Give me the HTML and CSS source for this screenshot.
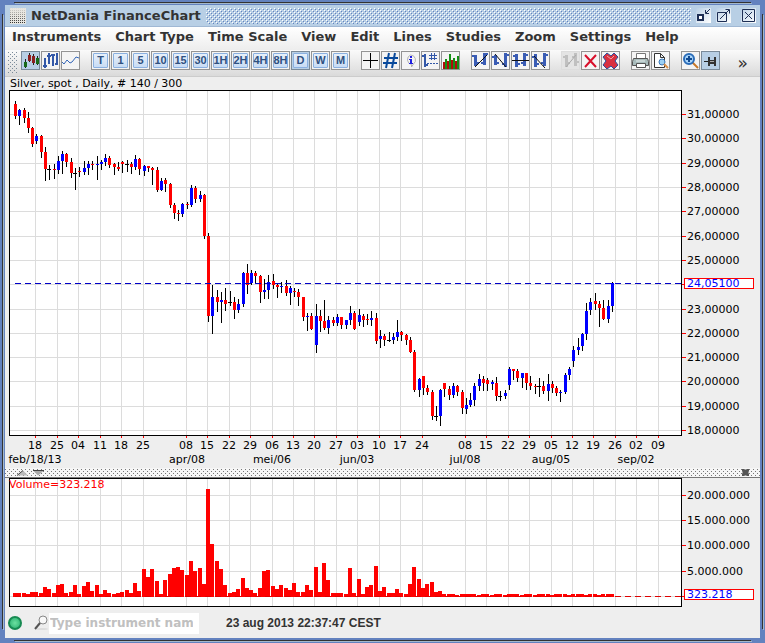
FILE: index.html
```
<!DOCTYPE html>
<html lang="en">
<head>
    <meta charset="utf-8">
    <title>NetDania FinanceChart</title>
    <link rel="stylesheet" href="styles.css">
    <script src="chart.js" defer></script>
</head>
<body>
    <div class="window">
        <header class="titlebar">
            <span class="app-icon"></span>
            <h1>NetDania FinanceChart</h1>
            <span class="bumps"></span>
            <button class="win-btn" aria-label="Minimize">
                <svg width="15" height="15" viewBox="0 0 15 15"><path d="M2 7h5v5H2z" class="win-line thick"/><path d="M14 1l-4 4M9.500 2v3.500H13" class="win-line"/></svg>
            </button>
            <button class="win-btn" aria-label="Maximize">
                <svg width="15" height="15" viewBox="0 0 15 15"><path d="M1.500 4.500h9v9h-9z" class="win-line thin"/><path d="M4 11l9-9M9.500 1.500h4v4" class="win-line"/></svg>
            </button>
            <button class="win-btn close" aria-label="Close">
                <svg width="15" height="15" viewBox="0 0 15 15"><path d="M1.500 1.500h12v12h-12z" class="win-line"/><path d="M4 4l7 7M11 4l-7 7" class="win-line"/></svg>
            </button>
        </header>

        <nav class="menubar">
            <button>Instruments</button>
            <button>Chart Type</button>
            <button>Time Scale</button>
            <button>View</button>
            <button>Edit</button>
            <button>Lines</button>
            <button>Studies</button>
            <button>Zoom</button>
            <button>Settings</button>
            <button>Help</button>
        </nav>

        <div class="toolbar">
            <span class="grip"></span>
            <div class="group">
                <button class="tool on" aria-label="Candlestick"><svg viewBox="0 0 17 17"><path d="M3.500 7v9M7.500 1v9M11.500 2v11M15.500 4v9" stroke="#222"/><path d="M2 10h3v5H2zM14 6h3v6h-3z" fill="#186a18"/><path d="M6 3h3v6H6zM10 4h3v7h-3z" fill="#8c2020"/></svg></button>
                <button class="tool" aria-label="Bars"><svg viewBox="0 0 17 17"><path d="M3 6v10M1 14h4M7 1v11M5 4h4M11 2v12M9 3h4M15 1v12M13 12h3" stroke="#3358a8" stroke-width="2" fill="none"/></svg></button>
                <button class="tool" aria-label="Line"><svg viewBox="0 0 17 17"><path d="M0 10l2 2 3-4 3 3 2-1 4-5 3 1" stroke="#3366b8" fill="none"/></svg></button>
            </div>
            <div class="group">
                <button class="tool"><span class="key">T</span></button>
                <button class="tool"><span class="key">1</span></button>
                <button class="tool"><span class="key">5</span></button>
                <button class="tool"><span class="key">10</span></button>
                <button class="tool"><span class="key">15</span></button>
                <button class="tool"><span class="key">30</span></button>
                <button class="tool"><span class="key">1H</span></button>
                <button class="tool"><span class="key">2H</span></button>
                <button class="tool"><span class="key">4H</span></button>
                <button class="tool"><span class="key">8H</span></button>
                <button class="tool on"><span class="key">D</span></button>
                <button class="tool"><span class="key">W</span></button>
                <button class="tool"><span class="key">M</span></button>
            </div>
            <div class="group">
                <button class="tool" aria-label="Crosshair"><svg viewBox="0 0 17 17"><path d="M8.500 1v15M1 8.500h15" stroke="#000"/></svg></button>
                <button class="tool" aria-label="Grid"><svg viewBox="0 0 17 17"><path d="M7 1L4 16M13 1l-3 15M2 6h14M1 11h14" stroke="#0a4a9c" stroke-width="2"/></svg></button>
                <button class="tool" aria-label="Info"><svg viewBox="0 0 17 17"><path d="M8.500 3a5 5 0 0 1 3 9l-2 3v-2.500a5 5 0 0 1-1-9.500z" fill="#f4f4f4" stroke="#b4b4b4"/><path d="M8 4h2v2H8zM7 7h3v4h1v1H7v-1h1V8H7z" fill="#2020e0"/></svg></button>
                <button class="tool" aria-label="Data window"><svg viewBox="0 0 17 17"><path d="M3 2v13M0 4h3M3 13h3" stroke="#3358a8" stroke-width="2"/><path d="M9.500 1v7M12.500 1v7M7 3.500h8M7 6.500h8" stroke="#3358a8"/><path d="M5 11.500h12" stroke="#3358a8" stroke-dasharray="2 1"/></svg></button>
                <button class="tool" aria-label="Volume"><svg viewBox="0 0 17 17"><path d="M1 10h2v7H1zM5 9h2v8H5zM9 8h2v9H9zM13 9h2v8h-2z" fill="#b00c0c"/><path d="M3 7h2v10H3zM7 2h2v15H7zM11 6h2v11h-2zM15 4h2v13h-2z" fill="#159015"/></svg></button>
            </div>
            <div class="group">
                <button class="tool" aria-label="Trend line"><svg viewBox="0 0 17 17"><path d="M2 3h3v11H2zM0 3h2v2H0zM5 10h2v2H5zM11 1h3v12h-3zM14 1h2v2h-2zM9 10h2v2H9z" fill="#3a5cb4"/><path d="M3 15L15 3" stroke="#111"/></svg></button>
                <button class="tool" aria-label="Falling line"><svg viewBox="0 0 17 17"><path d="M2 3h3v10H2zM0 4h2v2H0zM5 10h2v2H5zM12 1h3v14h-3zM15 2h2v2h-2zM10 11h2v2h-2z" fill="#3a5cb4"/><path d="M3 2l11 13" stroke="#111"/></svg></button>
                <button class="tool" aria-label="Horizontal line"><svg viewBox="0 0 17 17"><path d="M3 2h3v13H3zM1 3h2v2H1zM6 11h2v2H6zM11 1h3v13h-3zM14 2h2v2h-2zM9 10h2v2H9z" fill="#3a5cb4"/><path d="M0 8.500h17" stroke="#111"/></svg></button>
                <button class="tool" aria-label="Regression line"><svg viewBox="0 0 17 17"><path d="M2 2h3v13H2zM0 4h2v2H0zM5 11h2v2H5zM11 1h3v13h-3zM14 2h2v2h-2zM9 10h2v2H9z" fill="#3a5cb4"/><path d="M2 4l11 12" stroke="#111"/></svg></button>
            </div>
            <div class="group">
                <button class="tool off" aria-label="Edit line" disabled><svg viewBox="0 0 17 17"><path d="M3 3h3v12H3zM1 4h2v2H1zM6 10h2v2H6zM12 1h3v13h-3zM10 4h2v2h-2zM15 9h2v2h-2z" fill="#c0c0c0"/><path d="M4 15L14 3" stroke="#aaa"/></svg></button>
                <button class="tool" aria-label="Delete line"><svg viewBox="0 0 17 17"><path d="M3 3l11 12M14 3L3 15" stroke="#d8102c" stroke-width="2"/></svg></button>
                <button class="tool" aria-label="Delete all"><svg viewBox="0 0 17 17"><path d="M5 1l4 3 3-3 4 4-3 4 3 4-4 4-3-3-4 3-4-4 3-4-3-4z" fill="#d83040" stroke="#2c4d9c" stroke-linejoin="round"/><path d="M5 4l4 3 3-3" stroke="#f4a0a0" fill="none"/></svg></button>
            </div>
            <div class="group">
                <button class="tool" aria-label="Print"><svg viewBox="0 0 17 17"><path d="M4.500 7V1.500h9V7" fill="#fff" stroke="#777"/><path d="M1.500 6.500h14l1 3v4h-16v-4z" fill="#a9bcbc" stroke="#555"/><path d="M4.500 11.500h9v4h-9z" fill="#fff" stroke="#555"/><path d="M4 9h9" stroke="#e6eeee"/></svg></button>
                <button class="tool" aria-label="Print preview"><svg viewBox="0 0 17 17"><path d="M2.500 1.500h6l4 4v10h-10zM8.500 1.500v4h4" fill="#fff" stroke="#333"/><circle cx="10" cy="10" r="3" fill="#9cd0f4" stroke="#3a78b8"/><path d="M12 12l4 4" stroke="#d89048" stroke-width="2"/></svg></button>
            </div>
            <div class="group">
                <button class="tool" aria-label="Zoom in"><svg viewBox="0 0 17 17"><path d="M10 10l6 6" stroke="#c87828" stroke-width="2"/><circle cx="7" cy="7" r="5" fill="#a8d4fa" stroke="#2a6cb8" stroke-width="2"/><path d="M7 4v6M4 7h6" stroke="#124a90" stroke-width="2"/></svg></button>
                <button class="tool on" aria-label="Pin"><svg viewBox="0 0 17 17"><path d="M2 9.500h5" stroke="#222"/><path d="M6 5h2v9H6zM8 8h4v4H8zM12 5h2v9h-2z" fill="#333"/><path d="M8 9.500h4" stroke="#aaa"/></svg></button>
            </div>
            <button class="more" aria-label="More tools">»</button>
        </div>

        <main>
            <h2 class="chart-title">Silver, spot , Daily, # 140 / 300</h2>
            <svg id="priceChart" class="chart" viewBox="5 90 755 378" role="img" aria-label="Silver, spot"></svg>
            <div class="splitter">
                <svg class="arrows" width="28" height="6" viewBox="0 0 28 6"><path d="M0 5.500L6 .5l5 5z" fill="#bbb"/><path d="M0 5.500L6 .5" stroke="#444"/><path d="M16 .5h11l-6 5z" fill="#aaa"/><path d="M16 .5h11" stroke="#444"/></svg>
                <button class="split-close" aria-label="Close volume"><svg width="7" height="7" viewBox="0 0 7 7"><path d="M0 0h7v7H0z" fill="#aaa"/><path d="M0 0h2l1 1h1l1-1h2v2L6 3v1l1 1v2H5L4 6H3L2 7H0V5l1-1V3L0 2z" fill="#555"/></svg></button>
            </div>
            <svg id="volumeChart" class="chart" viewBox="5 478 755 130" role="img" aria-label="Volume"></svg>
        </main>

        <footer class="statusbar">
            <span class="led"></span>
            <label for="instrument"><svg width="15" height="16" viewBox="0 0 15 16"><ellipse cx="8" cy="14" rx="6" ry="1" fill="#ddd"/><circle cx="9" cy="5" r="4" fill="#f8f8f8" stroke="#888"/><path d="M6 8l-5 6" stroke="#555" stroke-width="2"/></svg></label>
            <input type="text" id="instrument" placeholder="Type instrument name" aria-label="Instrument name">
            <time>23 aug 2013 22:37:47 CEST</time>
        </footer>
    </div>
</body>
</html>
```
FILE: styles.css
```
* {
    box-sizing: border-box;
}

body {
    margin: 0;
    background-color: #6382bf;
    font-family: "DejaVu Sans", sans-serif;
    color: #333;
}

button {
    padding: 0;
    border: none;
    background: none;
    color: inherit;
    font: inherit;
}

.window {
    min-height: 100vh;
    padding: 5px;
    background-color: #6382bf;
    background-image:
        linear-gradient(#333, #333), linear-gradient(#a3b8cc, #a3b8cc),
        linear-gradient(#333, #333), linear-gradient(#a3b8cc, #a3b8cc),
        linear-gradient(#333, #333), linear-gradient(#a3b8cc, #a3b8cc),
        linear-gradient(#333, #333), linear-gradient(#a3b8cc, #a3b8cc);
    background-repeat: no-repeat;
    background-position:
        14px 2px, 15px 3px,
        14px calc(100% - 2px), 15px calc(100% - 1px),
        2px 14px, 3px 15px,
        calc(100% - 2px) 14px, calc(100% - 1px) 15px;
    background-size:
        calc(100% - 28px) 1px, calc(100% - 28px) 1px,
        calc(100% - 28px) 1px, calc(100% - 28px) 1px,
        1px calc(100% - 28px), 1px calc(100% - 28px),
        1px calc(100% - 28px), 1px calc(100% - 28px);
}

/* title bar */

.titlebar {
    display: flex;
    align-items: center;
    gap: 5px;
    height: 22px;
    padding: 0 4px 0 5px;
    background-color: #b8cfe5;
    border-bottom: 1px solid #a0b8d4;
}

.titlebar h1 {
    margin: 0;
    font-size: 13px;
    line-height: 20px;
}

.app-icon {
    width: 16px;
    height: 16px;
    background-color: #e8e6e0;
    background-image:
        linear-gradient(#e8e6e0, rgba(232, 230, 224, 0)),
        conic-gradient(at 1px 1px, transparent 75%, #222 0);
    background-size: 16px 16px, 2px 2px;
}

/* 1px dots, light and dark, on a 4px raster */
.bumps {
    flex: 1;
    height: 16px;
    background-image:
        conic-gradient(at 1px 1px, transparent 75%, #6382bf 0),
        conic-gradient(at 1px 1px, transparent 75%, #6382bf 0),
        conic-gradient(at 1px 1px, transparent 75%, #fff 0),
        conic-gradient(at 1px 1px, transparent 75%, #fff 0);
    background-size: 4px 4px;
    background-position: 1px 1px, 3px 3px, 0 0, 2px 2px;
}

.win-btn {
    display: flex;
    width: 15px;
    height: 15px;
    background-image: linear-gradient(135deg, #b8cfe5, #fff);
}

.win-btn.close {
    margin-left: 5px;
}

.win-line {
    fill: none;
    stroke: #1e2f55;
}

.win-line.thick {
    fill: #fff;
    stroke-width: 2;
}

/* menus */

.menubar {
    display: flex;
    gap: 14px;
    height: 23px;
    padding: 0 7px;
    background-image: linear-gradient(#fff, #ededed);
    font-size: 13px;
    font-weight: bold;
    line-height: 20px;
}

.menubar button {
    height: 20px;
}

/* tool bar */

.toolbar {
    display: flex;
    gap: 11px;
    height: 27px;
    padding: 1px 2px;
    background-image: linear-gradient(#fafafa, #dadada);
    border-bottom: 1px solid #ccc;
}

.grip {
    width: 10px;
    height: 22px;
    margin-right: -7px;
    background-image:
        conic-gradient(at 1px 1px, transparent 75%, #7a8a99 0),
        conic-gradient(at 1px 1px, transparent 75%, #7a8a99 0);
    background-size: 4px 4px;
    background-position: 1px 1px, 3px 3px;
}

.group {
    display: flex;
    gap: 1px;
}

.tool {
    display: flex;
    align-items: center;
    justify-content: center;
    width: 19px;
    height: 19px;
    border: 1px solid #949494;
    background-color: #f4f4f4;
}

.tool svg {
    width: 17px;
    height: 17px;
    fill: none;
}

.tool.on {
    background-color: #b8cfe5;
    border-color: #7a8a99;
}

.tool.off {
    background-color: #e4e4e4;
    border-color: #ddd;
}

.key {
    display: flex;
    justify-content: center;
    width: 15px;
    height: 15px;
    border: 1px solid #8ab0e0;
    border-radius: 1px;
    background-image: linear-gradient(#e8f0fa, #c8dcf4);
    color: #2f5080;
    font: bold 11px/13px "Liberation Sans", Arial, sans-serif;
}

.more {
    margin-left: auto;
    padding-right: 10px;
    font-size: 17px;
    line-height: 20px;
}

/* charts */

main {
    background-color: #eee;
}

.chart-title {
    margin: 0;
    padding-left: 5px;
    height: 13px;
    color: #000;
    font-size: 11px;
    font-weight: normal;
    line-height: 13px;
}

.chart {
    display: block;
    width: 100%;
    height: auto;
    font-size: 11px;
    shape-rendering: crispEdges;
}

.plot {
    fill: #fff;
    stroke: #000;
}

.grid {
    stroke: #dcdcdc;
}

.tick {
    stroke: #f00;
}

.wick,
.doji {
    stroke: #000;
}

.up-bar {
    fill: #00f;
}

.down-bar,
.caption {
    fill: #f00;
}

.last-line {
    stroke: #0000c8;
    stroke-dasharray: 6 4;
}

.last-line.volume {
    stroke: #e00000;
}

.last-box {
    fill: #fff;
    stroke: #f00;
}

.last-value {
    fill: #00f;
}

.splitter {
    display: flex;
    align-items: center;
    justify-content: space-between;
    height: 10px;
    padding: 0 11px 0 12px;
    border-bottom: 1px solid #777;
    background-color: #f6f6f6;
    background-image:
        conic-gradient(at 1px 1px, transparent 75%, #777 0),
        conic-gradient(at 1px 1px, transparent 75%, #777 0);
    background-size: 4px 4px;
    background-position: 0 1px, 2px 3px;
}

.split-close {
    display: flex;
}

/* status bar */

.statusbar {
    display: flex;
    align-items: center;
    height: 30px;
    padding: 0 3px;
    background-color: #eee;
}

.led {
    width: 14px;
    height: 14px;
    margin-right: 12px;
    border: 2px solid #178a52;
    border-radius: 50%;
    background-image: radial-gradient(#6ce0a0, #28b070);
}

.statusbar label {
    display: flex;
}

.statusbar input {
    width: 150px;
    height: 21px;
    padding: 0 6px 0 1px;
    border: none;
    background-color: #fff;
    font: bold 12px "DejaVu Sans", sans-serif;
}

.statusbar input::placeholder {
    color: #c0c0c0;
    opacity: 1;
}

.statusbar time {
    margin-left: 27px;
    font: bold 12px "Liberation Sans", Arial, sans-serif;
}
```
FILE: chart.js
```
const SVG = "http://www.w3.org/2000/svg";
const LEFT = 9;
const RIGHT = 681;

// high, body top, body bottom, low, kind (r = down, b = up, k = unchanged)
const candles = `
101 104 116 119 r,109 110 116 125 b,108 110 118 123 r,112 118 128 133 r,127 128 144 147 r,
134 136 141 144 b,135 136 152 158 r,147 152 169 181 r,165 169 170 180 k,164 169 170 179 r,
156 161 170 174 b,151 154 161 174 b,153 154 162 167 r,158 162 173 178 r,168 173 174 190 k,
167 171 172 177 r,161 168 172 175 b,161 164 168 175 b,161 164 165 170 r,156 164 165 180 b,
160 162 164 170 b,154 158 162 166 b,156 158 165 168 r,163 164 167 175 r,162 167 169 171 r,
161 162 164 173 r,160 164 165 172 k,162 164 167 174 r,155 159 167 170 b,158 159 169 175 r,
165 166 171 176 b,166 166 168 172 r,167 168 170 185 r,167 170 190 192 r,178 181 190 191 b,
178 180 184 192 r,183 184 205 208 r,203 205 213 219 r,210 213 214 221 r,203 204 214 217 b,
202 204 205 209 r,185 188 205 207 b,186 188 199 203 r,191 195 199 202 b,194 195 236 239 r,
233 236 316 322 r,285 297 316 334 b,290 297 302 312 r,292 300 302 323 b,288 300 304 311 r,
291 302 303 306 k,297 302 310 319 r,299 304 310 313 b,272 273 304 307 b,264 273 285 294 r,
270 273 283 285 b,271 273 276 283 r,275 276 292 303 r,279 290 292 299 b,275 282 290 299 b,
274 281 285 289 r,284 285 287 298 r,282 286 287 293 b,280 286 293 296 r,286 288 293 305 b,
288 291 292 297 r,289 292 297 306 r,297 297 317 321 r,313 316 317 331 b,313 316 329 330 r,
304 316 345 353 b,310 316 321 332 r,300 321 328 330 r,316 320 328 334 b,317 320 323 326 r,
314 317 323 326 b,317 317 325 329 r,320 320 325 329 b,306 313 320 325 b,311 313 329 330 r,
309 315 322 326 b,314 316 320 327 r,314 319 320 325 r,311 318 320 326 b,313 318 341 344 r,
330 336 339 348 b,334 336 340 346 r,332 340 341 342 k,333 337 340 344 b,320 332 337 341 b,
331 332 335 341 r,334 335 340 345 r,337 340 352 353 r,350 352 390 392 r,378 379 390 397 b,
376 376 388 395 r,385 388 392 395 r,390 392 416 420 r,406 416 417 421 k,389 390 416 426 b,
383 383 389 397 r,386 389 395 400 r,383 386 395 398 b,385 386 392 396 r,390 392 408 414 r,
398 405 409 414 b,393 400 405 407 b,383 386 400 406 b,374 379 386 391 b,376 379 383 391 r,
378 380 384 391 r,380 382 384 390 b,377 383 396 401 r,391 396 397 401 k,390 393 396 399 b,
367 369 385 390 b,369 369 371 380 r,369 371 378 382 r,373 373 378 388 b,373 373 383 390 r,
376 383 386 390 r,384 386 387 394 r,378 386 387 397 k,381 386 391 394 r,374 384 391 401 b,
381 384 388 393 r,386 388 393 396 r,390 392 393 402 b,373 375 392 394 b,367 369 375 380 b,
346 350 361 367 b,338 347 350 355 b,333 334 346 351 b,303 311 334 340 b,298 302 310 315 b,
293 301 304 310 r,301 304 308 327 r,300 308 319 320 r,300 306 319 323 b,282 283 306 312 b`
    .split(",").map(row => row.trim().split(" "));

const volumes = [
    4, 4, 4, 3, 5, 5, 4, 10, 8, 4, 12, 13, 4, 5, 12, 3, 11, 15, 6, 12,
    3, 7, 4, 3, 4, 5, 7, 4, 14, 6, 28, 20, 28, 16, 3, 17, 23, 29, 30, 27,
    22, 36, 26, 29, 13, 108, 53, 36, 28, 12, 4, 5, 8, 19, 9, 7, 4, 9, 26, 27,
    11, 8, 12, 9, 7, 14, 5, 5, 12, 7, 30, 5, 34, 17, 4, 4, 4, 3, 29, 4,
    18, 3, 10, 12, 31, 6, 10, 4, 4, 8, 4, 3, 13, 30, 18, 9, 13, 15, 5, 6,
    3, 3, 3, 2, 3, 3, 3, 3, 2, 3, 3, 2, 3, 3, 2, 3, 3, 3, 2, 3,
    3, 2, 3, 3, 3, 2, 3, 3, 3, 2, 3, 3, 3, 2, 3, 3, 2, 3, 3, 3
];

const weeks = [
    [35, "18"], [57, "25"], [78, "04"], [100, "11"], [121, "18"], [143, "25"], [186, "08"],
    [207, "15"], [229, "22"], [250, "29"], [272, "06"], [293, "13"], [314, "20"], [336, "27"],
    [357, "03"], [379, "10"], [400, "17"], [422, "24"], [465, "08"], [486, "15"], [508, "22"],
    [529, "29"], [551, "05"], [572, "12"], [593, "19"], [615, "26"], [636, "02"], [658, "09"]
];

const months = [
    [35, "feb/18/13"], [187, "apr/08"], [272, "mei/06"], [357, "jun/03"],
    [465, "jul/08"], [551, "aug/05"], [636, "sep/02"]
];

const prices = [
    [114, "31,00000"], [138, "30,00000"], [163, "29,00000"], [187, "28,00000"],
    [211, "27,00000"], [236, "26,00000"], [260, "25,00000"], [284, ""],
    [309, "23,00000"], [333, "22,00000"], [357, "21,00000"], [381, "20,00000"],
    [406, "19,00000"], [430, "18,00000"]
];

const volumeScale = [
    [495, "20.000.000"], [520, "15.000.000"], [545, "10.000.000"], [571, "5.000.000"], [596, ""]
];

function add(svg, tag, attrs, text) {
    const el = document.createElementNS(SVG, tag);
    for (const name in attrs) {
        el.setAttribute(name, attrs[name]);
    }
    if (text) {
        el.textContent = text;
    }
    svg.appendChild(el);
}

// one pixel wide line, centred on the pixel
function vline(svg, x, y1, y2, cls) {
    add(svg, "line", { x1: x + 0.5, x2: x + 0.5, y1: y1, y2: y2, class: cls });
}

function hline(svg, y, x1, x2, cls) {
    add(svg, "line", { x1: x1, x2: x2, y1: y + 0.5, y2: y + 0.5, class: cls });
}

function barX(i) {
    return Math.floor(15.42 + i * 4.295);
}

function drawPlot(svg, top, bottom, scale) {
    add(svg, "rect", { x: LEFT + 0.5, y: top + 0.5, width: RIGHT - LEFT, height: bottom - top, class: "plot" });
    weeks.forEach(([x]) => vline(svg, x, top + 1, bottom, "grid"));
    scale.forEach(([y, label]) => {
        hline(svg, y, LEFT + 1, RIGHT, "grid");
        hline(svg, y, RIGHT + 1, RIGHT + 5, "tick");
        if (label) {
            add(svg, "text", { x: RIGHT + 6, y: y + 4 }, label);
        }
    });
}

function drawLast(svg, y, label) {
    add(svg, "rect", { x: 684.5, y: y - 4.5, width: 69, height: 10, class: "last-box" });
    add(svg, "text", { x: RIGHT + 6, y: y + 4, class: "last-value" }, label);
}

function drawPrice() {
    const svg = document.getElementById("priceChart");
    drawPlot(svg, 90, 435, prices);
    weeks.forEach(([x, label]) => {
        vline(svg, x, 436, 438, "tick");
        add(svg, "text", { x: x, y: 449, "text-anchor": "middle" }, label);
    });
    months.forEach(([x, label]) => {
        add(svg, "text", { x: x, y: 463, "text-anchor": "middle" }, label);
    });
    candles.forEach(([high, top, bottom, low, kind], i) => {
        const x = barX(i);
        vline(svg, x, high, low, "wick");
        if (kind === "k") {
            hline(svg, +top, x - 2, x + 2, "doji");
        } else {
            add(svg, "rect", {
                x: x - 1, y: top, width: 3, height: bottom - top,
                class: kind === "b" ? "up-bar" : "down-bar"
            });
        }
    });
    hline(svg, 283, 15, RIGHT, "last-line");
    drawLast(svg, 283, "24,05100");
}

function drawVolume() {
    const svg = document.getElementById("volumeChart");
    drawPlot(svg, 478, 606, volumeScale);
    volumes.forEach((h, i) => {
        add(svg, "rect", { x: barX(i) - 2, y: 597 - h, width: 4, height: h, class: "down-bar" });
    });
    hline(svg, 596, 15, RIGHT, "last-line volume");
    add(svg, "text", { x: LEFT, y: 488, class: "caption" }, "Volume=323.218");
    drawLast(svg, 594, "323.218");
}

drawPrice();
drawVolume();
```
